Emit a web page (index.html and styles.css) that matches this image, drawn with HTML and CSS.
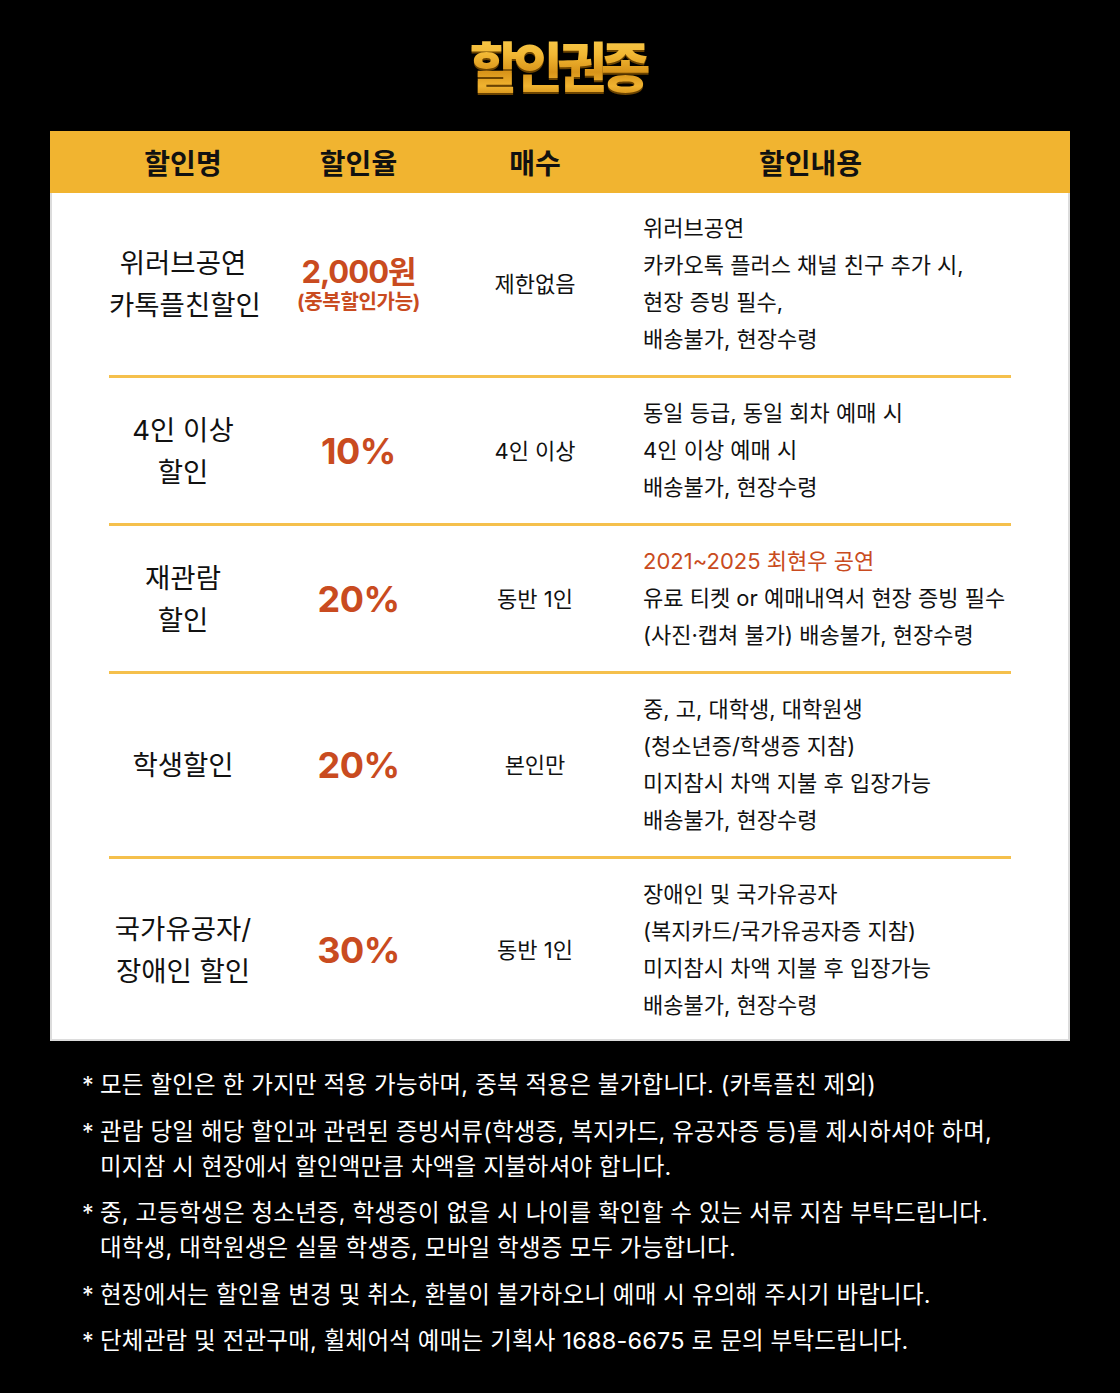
FILE: index.html
```html
<!DOCTYPE html>
<html lang="ko">
<head>
<meta charset="utf-8">
<title>할인권종</title>
<link rel="stylesheet" href="styles.css">
</head>
<body>
<div class="page">
  <h1 class="title">할인권종</h1>

  <div class="table">
    <div class="thead">
      <div class="th">할인명</div>
      <div class="th">할인율</div>
      <div class="th">매수</div>
      <div class="th">할인내용</div>
    </div>
    <div class="tbody">
      <div class="row">
        <div class="c-name">위러브공연<br>카톡플친할인</div>
        <div class="c-rate"><span class="amt">2,000원</span><span class="sub">(중복할인가능)</span></div>
        <div class="c-qty">제한없음</div>
        <div class="c-desc">위러브공연<br>카카오톡 플러스 채널 친구 추가 시,<br>현장 증빙 필수,<br>배송불가, 현장수령</div>
      </div>
      <div class="row">
        <div class="c-name">4인 이상<br>할인</div>
        <div class="c-rate"><span class="pct">10%</span></div>
        <div class="c-qty">4인 이상</div>
        <div class="c-desc">동일 등급, 동일 회차 예매 시<br>4인 이상 예매 시<br>배송불가, 현장수령</div>
      </div>
      <div class="row">
        <div class="c-name">재관람<br>할인</div>
        <div class="c-rate"><span class="pct">20%</span></div>
        <div class="c-qty">동반 1인</div>
        <div class="c-desc"><span class="red">2021~2025 최현우 공연</span><br>유료 티켓 or 예매내역서 현장 증빙 필수<br>(사진·캡쳐 불가) 배송불가, 현장수령</div>
      </div>
      <div class="row">
        <div class="c-name">학생할인</div>
        <div class="c-rate"><span class="pct">20%</span></div>
        <div class="c-qty">본인만</div>
        <div class="c-desc">중, 고, 대학생, 대학원생<br>(청소년증/학생증 지참)<br>미지참시 차액 지불 후 입장가능<br>배송불가, 현장수령</div>
      </div>
      <div class="row last">
        <div class="c-name">국가유공자/<br>장애인 할인</div>
        <div class="c-rate"><span class="pct">30%</span></div>
        <div class="c-qty">동반 1인</div>
        <div class="c-desc">장애인 및 국가유공자<br>(복지카드/국가유공자증 지참)<br>미지참시 차액 지불 후 입장가능<br>배송불가, 현장수령</div>
      </div>
    </div>
  </div>

  <ul class="notes">
    <li>모든 할인은 한 가지만 적용 가능하며, 중복 적용은 불가합니다. (카톡플친 제외)</li>
    <li>관람 당일 해당 할인과 관련된 증빙서류(학생증, 복지카드, 유공자증 등)를 제시하셔야 하며,<br>미지참 시 현장에서 할인액만큼 차액을 지불하셔야 합니다.</li>
    <li>중, 고등학생은 청소년증, 학생증이 없을 시 나이를 확인할 수 있는 서류 지참 부탁드립니다.<br>대학생, 대학원생은 실물 학생증, 모바일 학생증 모두 가능합니다.</li>
    <li>현장에서는 할인율 변경 및 취소, 환불이 불가하오니 예매 시 유의해 주시기 바랍니다.</li>
    <li>단체관람 및 전관구매, 휠체어석 예매는 기획사 1688-6675 로 문의 부탁드립니다.</li>
  </ul>
</div>
</body>
</html>
```

FILE: styles.css
```css
* { box-sizing: border-box; }
html, body {
  margin: 0;
  padding: 0;
  background: #000;
}
body {
  font-family: Inter, "Noto Sans CJK KR", "Noto Sans", sans-serif;
  color: #111;
}
.page {
  width: 1120px;
  padding: 30px 0 30px;
}
.title {
  margin: 0 auto;
  text-align: center;
  font-family: "Noto Sans CJK KR", sans-serif;
  font-size: 54px;
  line-height: 70px;
  font-weight: 900;
  letter-spacing: -6px;
  color: #f0b02a;
  background: linear-gradient(180deg, #fbd155 0%, #f2b834 35%, #d89419 60%, #f0b330 80%, #c8820f 100%);
  -webkit-background-clip: text;
  background-clip: text;
  -webkit-text-fill-color: transparent;
  filter: drop-shadow(0 2px 0 #6b4300);
  width: fit-content;
  padding-right: 6px;
}
.table {
  margin: 31px 50px 0;
}
.thead, .row {
  display: grid;
  grid-template-columns: 148px 203px 150px 401px;
}
.thead {
  background: #f1b430;
  height: 62px;
  padding: 3px 59px 0;
  align-items: center;
}
.th {
  text-align: center;
  font-size: 28px;
  font-weight: 700;
  color: #111;
  line-height: 30px;
}
.tbody {
  background: #fff;
  border: 2px solid #dcdcdc;
  border-top: none;
  padding: 0 57px;
}
.row {
  border-bottom: 3px solid #f5c04c;
  padding: 17px 0;
  align-items: center;
}
.row.last {
  border-bottom: none;
  padding: 17px 0 15px;
}
.c-name {
  text-align: center;
  font-size: 27.5px;
  line-height: 42px;
  color: #111;
  white-space: nowrap;
}
.c-rate {
  text-align: center;
  color: #c94b20;
  font-weight: 700;
  display: flex;
  flex-direction: column;
  align-items: center;
}
.amt {
  font-size: 31px;
  line-height: 36px;
  letter-spacing: -1px;
}
.sub {
  font-size: 20px;
  line-height: 24px;
  letter-spacing: -0.3px;
}
.pct {
  font-size: 36px;
  line-height: 44px;
  letter-spacing: -0.5px;
}
.c-qty {
  text-align: center;
  font-size: 22px;
  line-height: 30px;
  color: #111;
}
.c-desc {
  padding-left: 33px;
  font-size: 22px;
  line-height: 37px;
  color: #111;
  white-space: nowrap;
}
.red { color: #c94b20; }
.notes {
  list-style: none;
  margin: 26px 0 0;
  padding: 0 20px 0 82px;
  color: #fff;
  font-size: 23.5px;
  line-height: 35px;
  letter-spacing: 0.2px;
}
.notes li {
  position: relative;
  padding-left: 18px;
  margin-bottom: 11.5px;
}
.notes li::before {
  content: "*";
  position: absolute;
  left: 0;
  top: 0;
}
```
